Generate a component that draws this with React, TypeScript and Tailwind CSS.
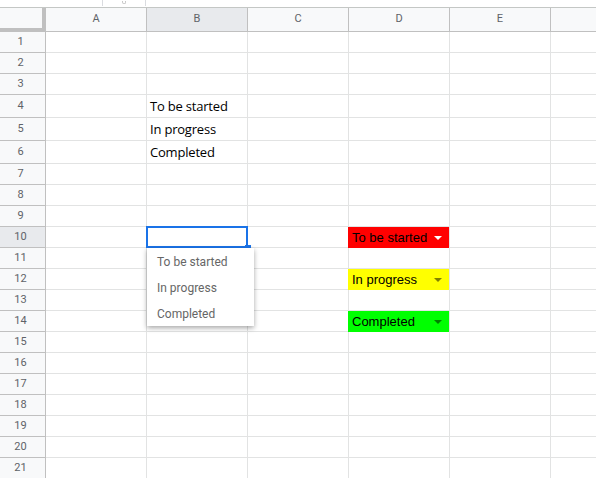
import React from "react";

const cols = ["A", "B", "C", "D", "E", "F"];
const colW = [101, 101, 101, 101, 101, 101];
const rowH = [21, 21, 21, 23, 23, 23, 21, 21, 21, 21, 21, 21, 21, 21, 21, 21, 21, 21, 21, 21, 21];

const list: Record<number, string> = { 4: "To be started", 5: "In progress", 6: "Completed" };

const chips: Record<number, { label: string; bg: string; arrow: string }> = {
  10: { label: "To be started", bg: "bg-[#ff0000]", arrow: "border-t-white" },
  12: { label: "In progress", bg: "bg-[#ffff00]", arrow: "border-t-[#808000]" },
  14: { label: "Completed", bg: "bg-[#00ff00]", arrow: "border-t-[#008000]" },
};

function Chip({ label, bg, arrow }: { label: string; bg: string; arrow: string }) {
  return (
    <div className={`absolute -left-px top-0 w-[101px] h-[21px] ${bg} flex items-center justify-between pl-[4px] pr-[7px]`}>
      <span className="text-[13px] text-black font-['Liberation_Sans',Arial,sans-serif]">{label}</span>
      <span className={`w-0 h-0 border-x-[4px] border-x-transparent border-t-[4px] ${arrow}`} />
    </div>
  );
}

function Dropdown() {
  return (
    <div className="absolute left-0 top-[21px] z-20 w-[107px] h-[78px] bg-white shadow-[0_2px_5px_rgba(0,0,0,0.35)] flex flex-col justify-center gap-[7px] pl-[10px] pt-[2px] font-['Roboto',Arial,sans-serif] text-[12px] text-[#666]">
      <span className="leading-[19px]">To be started</span>
      <span className="leading-[19px]">In progress</span>
      <span className="leading-[19px]">Completed</span>
    </div>
  );
}

export default function App() {
  return (
    <div className="w-[596px] h-[478px] overflow-hidden bg-white font-['Roboto',Arial,sans-serif] select-none">
      {/* formula bar remnant */}
      <div className="h-[7px] border-b border-[#c4c7c5] flex box-content">
        <div className="w-[102px]" />
        <div className="w-px h-[6px] bg-[#dadce0]" />
        <div className="w-[42px] flex justify-center">
          <span className="w-[4px] h-[3px] border-b border-x border-[#c8c8c8] rounded-b-full mt-[1px]" />
        </div>
        <div className="w-px h-[6px] bg-[#dadce0]" />
      </div>

      {/* column headers; F is only partly in view, its letter falls outside */}
      <div className="flex h-[24px]">
        <div className="w-[46px] shrink-0 bg-[#f8f9fa] border-r-[4px] border-b-[4px] border-[#c0c0c0] box-border" />
        {cols.map((c, i) => (
          <div
            key={c}
            style={{ width: colW[i] }}
            className={`shrink-0 box-border border-r border-b border-[#c0c0c0] flex items-center justify-center text-[11px] text-[#5f6368] ${
              c === "B" ? "bg-[#e8eaed] text-[#3c4043]" : "bg-[#f8f9fa]"
            }`}
          >
            {c !== "F" && c}
          </div>
        ))}
      </div>

      {/* rows */}
      {rowH.map((h, r) => {
        const n = r + 1;
        return (
          <div key={n} className="flex" style={{ height: h }}>
            <div
              className={`w-[46px] shrink-0 box-border border-r border-b border-[#c0c0c0] flex items-center justify-center pr-[4px] text-[11px] text-[#5f6368] ${
                n === 10 ? "bg-[#e8eaed] text-[#3c4043]" : "bg-[#f8f9fa]"
              }`}
            >
              {n}
            </div>
            {cols.map((c, i) => (
              <div
                key={c}
                style={{ width: colW[i] }}
                className="relative shrink-0 box-border border-r border-b border-[#e2e3e3]"
              >
                {c === "B" && list[n] && (
                  <span className="absolute left-[3px] bottom-[1px] text-[13px] text-black font-['Open_Sans',sans-serif] tracking-[-0.2px]">
                    {list[n]}
                  </span>
                )}
                {c === "B" && n === 10 && (
                  <>
                    <div className="absolute -left-px -top-px w-[102px] h-[22px] border-2 border-[#1a73e8] z-10" />
                    <div className="absolute right-[-4px] bottom-[-3px] w-[6px] h-[5px] bg-[#1a73e8] z-10" />
                    <Dropdown />
                  </>
                )}
                {c === "D" && chips[n] && <Chip {...chips[n]} />}
              </div>
            ))}
          </div>
        );
      })}
    </div>
  );
}
